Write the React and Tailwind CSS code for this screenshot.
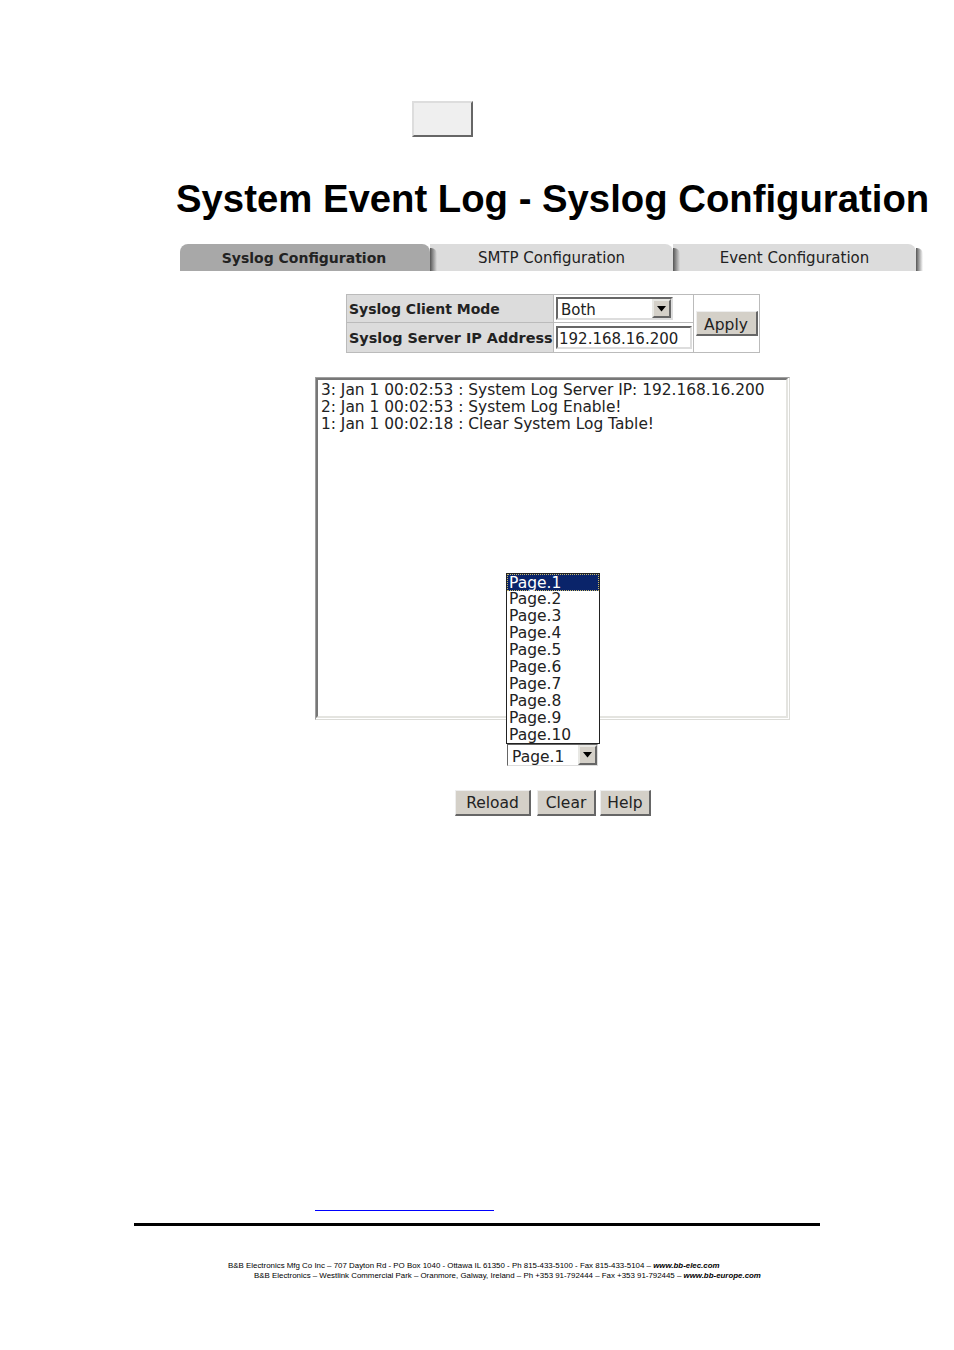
import React from "react";

const pages = ["Page.1", "Page.2", "Page.3", "Page.4", "Page.5", "Page.6", "Page.7", "Page.8", "Page.9", "Page.10"];

const logLines = [
  "3: Jan 1 00:02:53 : System Log Server IP: 192.168.16.200",
  "2: Jan 1 00:02:53 : System Log Enable!",
  "1: Jan 1 00:02:18 : Clear System Log Table!",
];

const verdana = "font-['DejaVu_Sans',sans-serif]";

const Arrow = ({ className }) => (
  <span className={`flex shrink-0 items-center justify-center bg-[#d4d0c8] border-2 border-t-[#e8e8e4] border-l-[#e8e8e4] border-r-[#666666] border-b-[#666666] ${className}`}>
    <svg width="11" height="6" viewBox="0 0 11 6">
      <path d="M1 0h9L5.500 5.500z" fill="#000" />
    </svg>
  </span>
);

const Tab = ({ label, active, className }) => (
  <div
    className={`relative flex h-[27px] items-center justify-center rounded-tr-lg pt-[2px] ${active ? "rounded-tl-lg bg-[#a8a8a8] pr-[2px] text-[14px] font-bold" : "bg-[#dcdcdc] text-[15px]"} text-[#222] ${className}`}
  >
    {label}
    <span className="absolute top-[4px] bottom-0 left-full z-10 w-[7px] rounded-tr-md bg-gradient-to-r from-[#555555] to-transparent" />
  </div>
);

const Button = ({ label, className }) => (
  <button className={`flex items-center justify-center bg-[#d4d0c8] border-r-2 border-b-2 border-r-[#666666] border-b-[#666666] border-t border-l border-t-[#eeeeee] border-l-[#eeeeee] text-[15.5px] text-[#222] ${className}`}>
    {label}
  </button>
);

const App = () => {
  return (
    <div className={`h-[1350px] w-[954px] overflow-hidden bg-white ${verdana}`}>
      <div className="pl-[412px] pt-[101px]">
        <div className="h-[36px] w-[61px] border-2 border-[#dddddd] border-r-[#666666] border-b-[#666666] bg-[#efefef]" />
      </div>

      <h1 className="mt-[39px] pl-[176px] font-['Liberation_Sans',sans-serif] text-[38.300px] leading-[46px] font-bold whitespace-nowrap text-black">
        System Event Log - Syslog Configuration
      </h1>

      <div className="mt-[22px] ml-[180px] flex w-[736px]">
        <Tab label="Syslog Configuration" active className="w-[250px]" />
        <Tab label="SMTP Configuration" className="w-[243px]" />
        <Tab label="Event Configuration" className="w-[243px]" />
      </div>

      <div className="mt-[23px] ml-[346px] flex h-[59px] w-[414px] border border-[#bbbbbb] text-[15px] text-[#222]">
        <div className="flex w-[206px] flex-col bg-[#dcdcdc] font-bold">
          <div className="flex h-[28px] items-center border-b border-[#bbbbbb] pt-[2px] pl-[2px] text-[14px]">Syslog Client Mode</div>
          <div className="flex flex-1 items-center pt-[2px] pl-[2px] text-[14.400px] whitespace-nowrap">Syslog Server IP Address</div>
        </div>
        <div className="flex w-[141px] flex-col border-x border-[#bbbbbb]">
          <div className="flex h-[28px] items-center border-b border-[#bbbbbb] pl-[2px]">
            <div className="flex h-[23px] w-[117px] items-center justify-between border-2 border-[#666666] border-r-[#dddddd] border-b-[#dddddd] pl-[3px]">
              <span className="mt-[4px]">Both</span>
              <Arrow className="h-[19px] w-[19px]" />
            </div>
          </div>
          <div className="flex flex-1 items-center pl-[2px]">
            <div className="flex h-[23px] w-[136px] items-center border-2 border-[#666666] border-r-[#dddddd] border-b-[#dddddd] pt-[3px] pl-px">
              192.168.16.200
            </div>
          </div>
        </div>
        <div className="flex flex-1 items-center justify-center">
          <Button label="Apply" className="h-[25px] w-[62px] pt-[5px]" />
        </div>
      </div>

      <div className="mt-[24px] ml-[315px] h-[343px] w-[475px] border border-[#a0a0a0] border-r-[#dcdcd8] border-b-[#dcdcd8] pr-px pb-px">
        <div className="h-full border-2 border-[#777777] border-r-[#e4e4e0] border-b-[#e4e4e0] pt-[2px] pl-[3px] text-[15.400px] leading-[17px] whitespace-nowrap text-[#222]">
          {logLines.map((line) => (
            <div key={line}>{line}</div>
          ))}
        </div>
      </div>

      <div className="relative mt-[24px] ml-[507px] flex h-[22px] w-[91px] items-center justify-between border border-[#dddddd] border-t-[#666666] border-l-[#666666] pl-[4px] text-[15.500px] text-[#222]">
        <span className="mt-[5px]">Page.1</span>
        <Arrow className="h-[20px] w-[19px]" />
        <div className="absolute bottom-[21px] -left-[2px] w-[94px] border border-[#222] bg-white text-[15.500px] leading-[17px]">
          {pages.map((page, i) => (
            <div
              key={page}
              className={`h-[16.900px] pl-[2px] ${i === 0 ? "border border-dotted border-[#c9b96a] bg-[#0a246a] pl-px leading-[16px] text-white" : "pt-[0.500px] text-[#222]"}`}
            >
              {page}
            </div>
          ))}
        </div>
      </div>

      <div className="mt-[24px] ml-[455px] flex">
        <Button label="Reload" className="h-[26px] w-[76px] pt-[3px]" />
        <Button label="Clear" className="ml-[6px] h-[26px] w-[59px] pt-[3px]" />
        <Button label="Help" className="ml-[4px] h-[26px] w-[51px] pt-[3px]" />
      </div>

      <div className="mt-[394px] ml-[315px] h-px w-[179px] bg-[#0000ff]" />
      <div className="mt-[12px] ml-[134px] h-[3px] w-[686px] bg-black" />

      <div className="mt-[35px] font-['Liberation_Sans',sans-serif] text-[7.900px] leading-[10px] whitespace-nowrap text-black">
        <div className="pl-[228px]">
          B&amp;B Electronics Mfg Co Inc – 707 Dayton Rd - PO Box 1040 - Ottawa IL 61350 - Ph 815-433-5100 - Fax 815-433-5104 –{" "}
          <b className="italic">www.bb-elec.com</b>
        </div>
        <div className="pl-[254px]">
          B&amp;B Electronics – Westlink Commercial Park – Oranmore, Galway, Ireland – Ph +353 91-792444 – Fax +353 91-792445 –{" "}
          <b className="italic">www.bb-europe.com</b>
        </div>
      </div>
    </div>
  );
};

export default App;
